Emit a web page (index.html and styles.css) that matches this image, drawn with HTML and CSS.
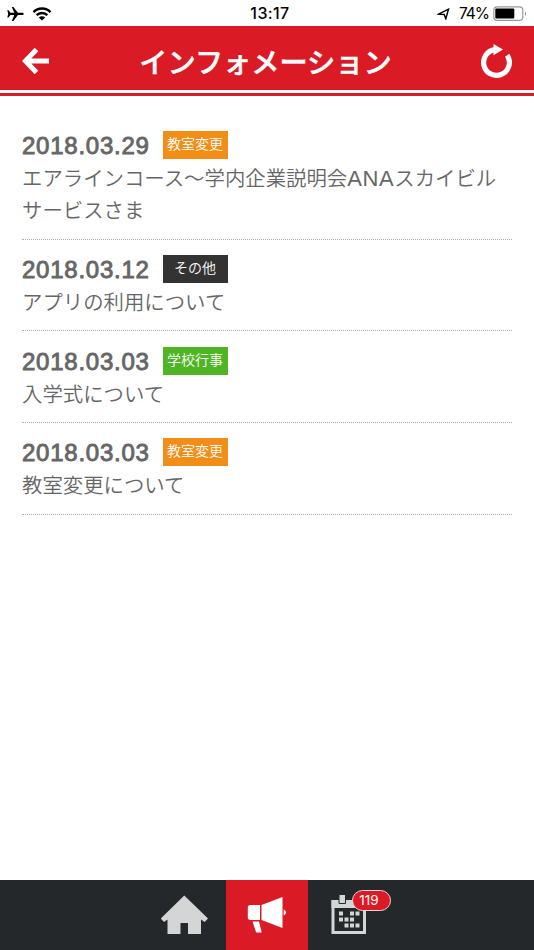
FILE: index.html
```html
<!DOCTYPE html>
<html lang="ja">
<head>
<meta charset="utf-8">
<title>インフォメーション</title>
<link rel="stylesheet" href="styles.css">
</head>
<body>
<div class="status">
  <div class="status-left">
    <svg width="17" height="16" viewBox="0 0 17 16"><path d="M0.300 4.200h1.300l1.800 2.600h3.900L4.800 1h1.600l4.500 5.800h4c2.400 0 2.400 2.200 0 2.200h-4l-4.500 6H4.800l2.500-6H3.400l-1.800 2.600H.3L1.200 8z"/></svg>
    <svg class="wifi" width="20" height="16" viewBox="0 0 20 16"><g fill="none" stroke="#000" stroke-width="2.500"><path d="M1.500 6.100a12 12 0 0 1 17 0"/><path d="M4.600 9.200a7.600 7.600 0 0 1 10.800 0"/></g><path d="M6.800 11.500a4.500 4.500 0 0 1 6.400 0L10 14.600z"/></svg>
  </div>
  <span class="clock">13:17</span>
  <div class="status-right">
    <svg width="13" height="12" viewBox="0 0 13 12"><path d="M1.500 6.200 11.500 1.200 8.800 10.800 7.200 6.500z" fill="none" stroke="#000" stroke-width="1.400"/></svg>
    <span class="percent">74%</span>
    <svg class="battery" width="34" height="16" viewBox="0 0 34 16"><rect x=".8" y=".8" width="29" height="13.600" rx="3.500" fill="none" stroke="#999" stroke-width="1.200"/><rect x="2.300" y="2.600" width="19" height="10" rx="1"/><path d="M32 5.500q2 2 0 4.500z" fill="#888"/></svg>
  </div>
</div>
<header class="header">
  <svg class="back" width="28" height="28" viewBox="0 0 28 28"><path d="M14.500 2.500 3.500 14l11 11.500M4 14h23" fill="none" stroke="#fff" stroke-width="5"/></svg>
  <h1>インフォメーション</h1>
  <svg class="reload" width="32" height="34" viewBox="0 0 32 34"><path d="M27.200 11.200A12.900 12.900 0 1 1 15 5.600" fill="none" stroke="#fff" stroke-width="5.200"/><path d="M13.500 0 23 5.600l-9.500 5.600z" fill="#fff"/></svg>
</header>
<main class="list">
  <article class="item">
    <div class="meta"><time>2018.03.29</time><span class="tag orange">教室変更</span></div>
    <p>エアラインコース～学内企業説明会<span class="latin">ANA</span>スカイビルサービスさま</p>
  </article>
  <article class="item">
    <div class="meta"><time>2018.03.12</time><span class="tag dark">その他</span></div>
    <p>アプリの利用について</p>
  </article>
  <article class="item">
    <div class="meta"><time>2018.03.03</time><span class="tag green">学校行事</span></div>
    <p>入学式について</p>
  </article>
  <article class="item">
    <div class="meta"><time>2018.03.03</time><span class="tag orange">教室変更</span></div>
    <p>教室変更について</p>
  </article>
</main>
<nav class="tabs">
  <a class="tab"><svg width="48" height="40" viewBox="0 0 48 40"><path d="M23.300 .5 47 23.500l-3.300 3.500-3.700-2.500V39H27V28h-7.500v11H6.500V24.500L3 27 -.2 23.500z" fill="#d4d6d5"/></svg></a>
  <a class="tab active"><svg width="40" height="38" viewBox="0 0 40 38"><g fill="#fff"><path d="M3.500 9H13v15H3.500q-2.700 0-2.700-2.700v-9.600Q.8 9 3.500 9zM14.500 9 35.500 1v31L14.500 24zM5.500 25.500h6.500l2.700 11H9.200zM36.700 13.500q5 3 0 6z"/></g></svg></a>
  <a class="tab"><svg width="36" height="40" viewBox="0 0 36 40"><path d="M2 6.500h31.500v31H2z" fill="none" stroke="#d4d6d5" stroke-width="3"/><path d="M.5 5h34.500v8H.5z" fill="#d4d6d5"/><path d="M8 -.5h6.500v9H8zM24 -.5h6.500v9H24z" fill="#d4d6d5" stroke="#24282b"/><path d="M8 16.500h4v4H8zm11 0h4v4h-4zm5.500 0h4v4h-4zM8 22.500h4v4H8zm5.500 0h4v4h-4zm5.500 0h4v4h-4zm-5.500 6h4v4h-4zm5.500 0h4v4h-4zm5.500 0h4v4h-4z" fill="#d4d6d5"/></svg><span class="count">119</span></a>
</nav>
</body>
</html>
```
FILE: styles.css
```css
* { box-sizing: border-box; }
body {
  margin: 0;
  height: 950px;
  display: flex;
  flex-direction: column;
  overflow: hidden;
  background: #fff;
  color: #666;
  font-family: "Noto Sans CJK JP", sans-serif;
}
svg { display: block; flex: none; }
.status {
  height: 26px;
  display: grid;
  grid-template-columns: 1fr auto 1fr;
  align-items: center;
  color: #000;
  font: 500 16px/27px Inter, sans-serif;
}
.status-left { display: flex; align-items: center; padding-left: 7px; }
.wifi { margin-left: 8px; }
.clock { padding-left: 6px; letter-spacing: .4px; }
.status-right { display: flex; align-items: center; justify-content: flex-end; padding-right: 7px; }
.percent { margin: 0 4px 0 9px; font-size: 15.5px; font-weight: 400; letter-spacing: -1px; }
.header {
  height: 70px;
  flex: none;
  display: flex;
  align-items: flex-start;
  justify-content: space-between;
  padding: 0 22px;
  color: #fff;
  background: linear-gradient(#da1b25 64px, #fff 64px, #fff 67px, #da1b25 67px);
}
h1 {
  margin: 0;
  padding-left: 1px;
  font-size: 28.2px;
  line-height: 69px;
  font-weight: 500;
  -webkit-text-stroke: .5px #fff;
}
.back { margin-top: 21px; }
.reload { margin-top: 18px; }
.list { flex: 1; padding: 20px 22px 0; }
.item { padding: 14.4px 0 13.28px; border-bottom: 1px dotted #aaa; }
.meta { display: flex; height: 31px; }
time {
  width: 141px;
  font: 400 24px/32px "Liberation Sans", sans-serif;
  letter-spacing: .75px;
  -webkit-text-stroke: .9px #666;
}
.tag {
  width: 65px;
  height: 28px;
  margin-top: 1px;
  padding-right: 1px;
  color: #fff;
  font-size: 14px;
  line-height: 25px;
  font-weight: 350;
  text-align: center;
}
.orange { background: #f28d18; }
.dark { background: #333; }
.green { background: #4fb524; }
p { margin: 0; font-size: 20.4px; line-height: 32px; font-weight: 350; word-break: break-all; }
.latin { font-family: "Liberation Sans", sans-serif; font-size: 22px; line-height: 1; letter-spacing: .6px; }
.tabs {
  height: 70px;
  flex: none;
  display: grid;
  grid-template-columns: repeat(3, 82px);
  justify-content: center;
  background: #24282b;
}
.tab { position: relative; display: flex; align-items: center; justify-content: center; }
.active { background: #da1b25; }
.count {
  position: absolute;
  left: 44px;
  top: 10px;
  width: 39px;
  height: 21px;
  padding-right: 5px;
  border: 1.5px solid #e8d5d5;
  border-radius: 11px;
  background: #da1b25;
  color: #fff;
  font: 400 13.5px/19px Inter, sans-serif;
  text-align: center;
}
```
